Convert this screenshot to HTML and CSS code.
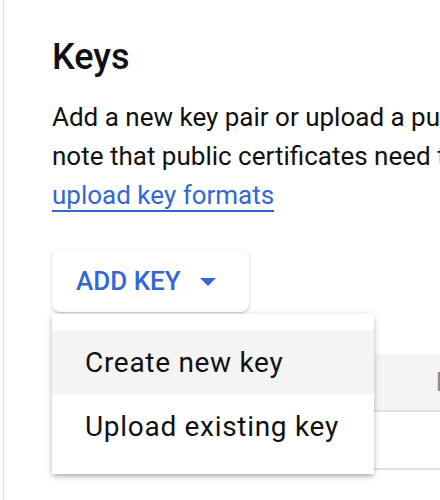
FILE: index.html
```html
<!DOCTYPE html>
<html lang="en">
<head>
<meta charset="utf-8">
<title>Keys</title>
<link rel="stylesheet" href="styles.css">
</head>
<body>
<div class="page">
  <h1 class="title">Keys</h1>
  <p class="intro">Add a new key pair or upload a public key certificate from an existing key pair. Please<br>note that public certificates need to be in RSA_X509_PEM format. Learn more about<br><a class="link" href="#">upload key formats</a></p>
  <div class="dropdown">
    <button class="add-btn" type="button">
      <span class="add-label">ADD KEY</span>
      <svg class="caret" width="16" height="8" viewBox="0 0 16 8" aria-hidden="true"><path d="M0 0h16L8 8z" fill="#3367d6"/></svg>
    </button>
    <ul class="menu">
      <li class="menu-item is-hover">Create new key</li>
      <li class="menu-item">Upload existing key</li>
    </ul>
  </div>
  <div class="table">
    <div class="row head">
      <span class="cell"></span>
      <span class="cell">Key</span>
    </div>
    <div class="row">
      <span class="cell"></span>
      <span class="cell"></span>
    </div>
  </div>
</div>
</body>
</html>
```
FILE: styles.css
```css
html, body {
  margin: 0;
  padding: 0;
  background: #fff;
  overflow: hidden;
}
.page {
  box-sizing: border-box;
  min-height: 100vh;
  margin-left: 3px;
  border-left: 1px solid #dcdcdc;
  padding: 35px 0 0 48px;
  font-family: Roboto, "Noto Sans", sans-serif;
  color: #111;
  overflow: hidden;
}
.title {
  margin: 0;
  font-size: 36px;
  line-height: 44px;
  font-weight: 500;
}
.intro {
  margin: 19px 0 0;
  font-size: 26px;
  line-height: 39px;
  white-space: nowrap;
}
.link {
  color: #3367d6;
  text-decoration: underline;
  text-decoration-thickness: 2px;
  text-underline-offset: 6px;
  text-decoration-skip-ink: none;
}
.dropdown {
  position: relative;
  display: inline-block;
  margin-top: 35px;
}
.add-btn {
  display: flex;
  align-items: center;
  box-sizing: border-box;
  height: 62px;
  padding: 0 33px 0 24px;
  border: 0;
  border-radius: 8px;
  background: #fff;
  box-shadow: 0 1px 3px rgba(0, 0, 0, 0.22), 0 1px 1px rgba(0, 0, 0, 0.06);
  font-family: Roboto, sans-serif;
  font-size: 26px;
  font-weight: 500;
  color: #3367d6;
}
.caret {
  margin-left: 19px;
  margin-top: 2px;
}
.menu {
  position: absolute;
  top: 64px;
  left: 0;
  z-index: 2;
  width: 322px;
  margin: 0;
  padding: 16px 0;
  list-style: none;
  background: #fff;
  box-shadow: 0 3px 5px -1px rgba(0, 0, 0, 0.28), 0 1px 8px rgba(0, 0, 0, 0.12);
}
.menu-item {
  display: flex;
  align-items: center;
  height: 64px;
  padding-left: 33px;
  font-size: 28px;
  letter-spacing: 0.7px;
  color: #111;
}
.menu-item.is-hover {
  background: #f4f4f4;
}
.table {
  margin-top: 42px;
  width: 900px;
}
.row {
  display: grid;
  grid-template-columns: 384px 1fr;
  align-items: center;
  height: 56px;
  border-bottom: 2px solid #e2e2e2;
}
.row.head {
  background: #f4f4f4;
}
.row.head .cell {
  font-size: 26px;
  font-weight: 500;
  color: #8a8a8a;
}
```
